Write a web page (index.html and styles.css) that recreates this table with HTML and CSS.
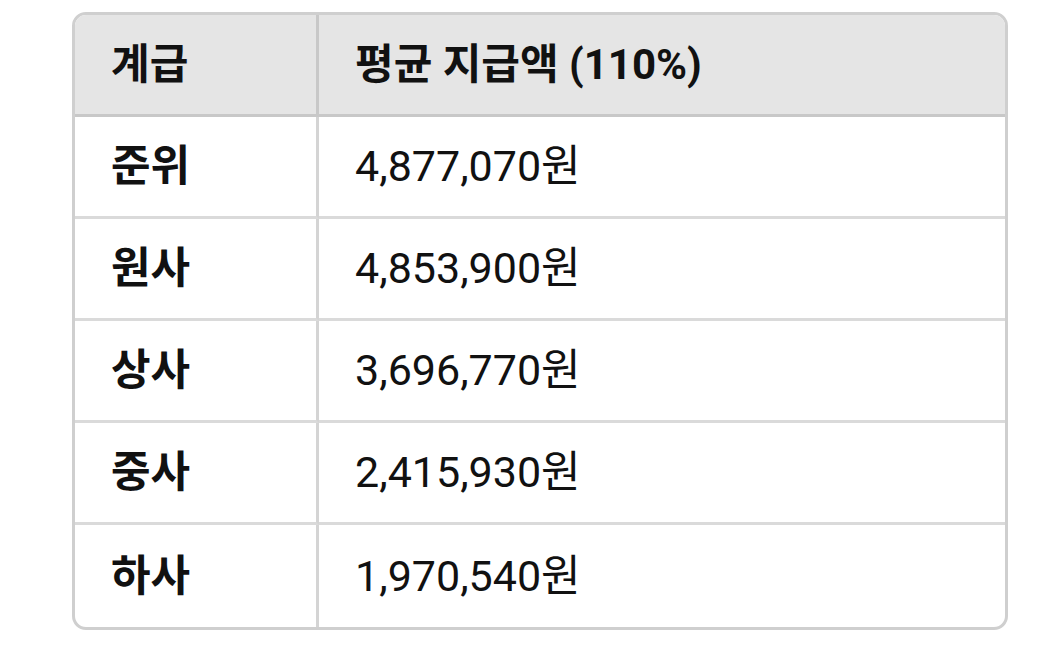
FILE: index.html
```html
<!DOCTYPE html>
<html lang="ko">
<head>
<meta charset="utf-8">
<link rel="stylesheet" href="styles.css">
</head>
<body>
<div class="table-wrap">
  <table class="pay-table">
    <thead>
      <tr><th class="col-rank">계급</th><th class="col-pay">평균 지급액 (110%)</th></tr>
    </thead>
    <tbody>
      <tr><td class="col-rank">준위</td><td class="col-pay">4,877,070원</td></tr>
      <tr><td class="col-rank">원사</td><td class="col-pay">4,853,900원</td></tr>
      <tr><td class="col-rank">상사</td><td class="col-pay">3,696,770원</td></tr>
      <tr><td class="col-rank">중사</td><td class="col-pay">2,415,930원</td></tr>
      <tr><td class="col-rank">하사</td><td class="col-pay">1,970,540원</td></tr>
    </tbody>
  </table>
</div>
</body>
</html>
```
FILE: styles.css
```css
html, body {
  margin: 0;
  padding: 0;
  background: #ffffff;
}
body {
  padding: 12px 40px 0 72px;
  font-family: Roboto, "Noto Sans CJK KR", sans-serif;
  color: #111111;
}
.table-wrap {
  width: 930px;
  border: 3px solid #cfcfcf;
  border-radius: 14px;
  overflow: hidden;
}
.pay-table {
  width: 100%;
  border-collapse: separate;
  border-spacing: 0;
  font-size: 43px;
}
.pay-table th,
.pay-table td {
  height: 102px;
  padding: 0 0 0 36px;
  text-align: left;
  vertical-align: middle;
  box-sizing: border-box;
  line-height: 1;
}
.pay-table th {
  background: #e5e5e5;
  font-weight: 700;
  font-size: 42px;
  border-bottom: 3px solid #c8c8c8;
}
.pay-table td {
  border-bottom: 3px solid #dadada;
}
.pay-table tbody tr:last-child td {
  border-bottom: none;
  height: 102px;
}
.col-rank {
  width: 244px;
  padding-left: 37px;
  border-right: 3px solid #d4d4d4;
}
.pay-table th.col-rank {
  border-right-color: #c8c8c8;
}
.pay-table td.col-rank {
  font-weight: 700;
}
.pay-table td.col-pay {
  font-weight: 400;
}
```
